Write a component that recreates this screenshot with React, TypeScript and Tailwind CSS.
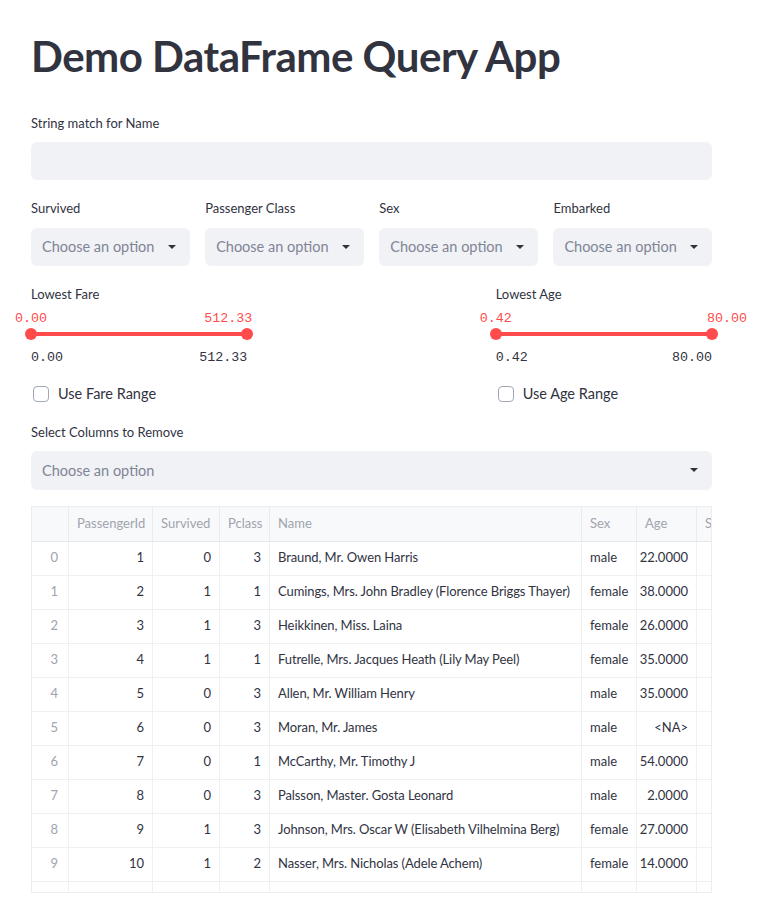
import React from "react";

const rows: [number, number, number, string, string, string][] = [
  [1, 0, 3, "Braund, Mr. Owen Harris", "male", "22.0000"],
  [2, 1, 1, "Cumings, Mrs. John Bradley (Florence Briggs Thayer)", "female", "38.0000"],
  [3, 1, 3, "Heikkinen, Miss. Laina", "female", "26.0000"],
  [4, 1, 1, "Futrelle, Mrs. Jacques Heath (Lily May Peel)", "female", "35.0000"],
  [5, 0, 3, "Allen, Mr. William Henry", "male", "35.0000"],
  [6, 0, 3, "Moran, Mr. James", "male", "<NA>"],
  [7, 0, 1, "McCarthy, Mr. Timothy J", "male", "54.0000"],
  [8, 0, 3, "Palsson, Master. Gosta Leonard", "male", "2.0000"],
  [9, 1, 3, "Johnson, Mrs. Oscar W (Elisabeth Vilhelmina Berg)", "female", "27.0000"],
  [10, 1, 2, "Nasser, Mrs. Nicholas (Adele Achem)", "female", "14.0000"],
  [11, 1, 3, "Sandstrom, Miss. Marguerite Rut", "female", "4.0000"],
];

function Caret() {
  return (
    <svg width="10" height="6" viewBox="0 0 10 6" className="shrink-0">
      <path d="M1 1h8L5 5z" fill="#31333f" />
    </svg>
  );
}

function Label({ children }: { children: React.ReactNode }) {
  return <div className="h-[21px] text-[13px] leading-[21px] text-[#31333f]">{children}</div>;
}

function Select({ label }: { label: string }) {
  return (
    <div className="flex flex-col">
      <Label>{label}</Label>
      <div className="mt-[8.5px] flex h-[38.4px] items-center justify-between rounded-[6px] bg-[#f0f2f6] pl-[11px] pr-[13px]">
        <span className="text-[14.5px] text-[#808495]">Choose an option</span>
        <Caret />
      </div>
    </div>
  );
}

function Slider({
  label,
  min,
  max,
  rightTop,
}: {
  label: string;
  min: string;
  max: string;
  rightTop: "end" | "start";
}) {
  return (
    <div className="flex flex-col">
      <Label>{label}</Label>
      <div className="relative mt-[5px] h-[28px]">
        <span className="absolute left-0 top-[1px] -translate-x-1/2 font-[family-name:'Liberation_Mono',monospace] text-[13.33px] leading-[16px] text-[#ff4b4b]">
          {min}
        </span>
        {rightTop === "end" ? (
          <span className="absolute right-[-5px] top-[1px] font-[family-name:'Liberation_Mono',monospace] text-[13.33px] leading-[16px] text-[#ff4b4b]">
            {max}
          </span>
        ) : (
          <span className="absolute left-[calc(100%-5px)] top-[1px] font-[family-name:'Liberation_Mono',monospace] text-[13.33px] leading-[16px] text-[#ff4b4b]">
            {max}
          </span>
        )}
        <div className="absolute bottom-[2px] left-0 right-0 h-[4px] rounded bg-[#ff4b4b]" />
        <div className="absolute bottom-[-2px] left-[-6px] h-[12px] w-[12px] rounded-full bg-[#ff4b4b]" />
        <div className="absolute bottom-[-2px] right-[-6px] h-[12px] w-[12px] rounded-full bg-[#ff4b4b]" />
      </div>
      <div className="mt-[12px] flex justify-between font-[family-name:'Liberation_Mono',monospace] text-[13.33px] leading-[16px] text-[#31333f]">
        <span>{min}</span>
        <span>{max}</span>
      </div>
    </div>
  );
}

function Checkbox({ label }: { label: string }) {
  return (
    <div className="flex h-[24px] items-center">
      <div className="ml-[2px] h-[16px] w-[16px] rounded-[4px] border border-[#a3a8b8] bg-white" />
      <span className="ml-[9px] text-[14.5px] text-[#31333f]">{label}</span>
    </div>
  );
}

const widths = ["w-[37px]", "w-[84px]", "w-[67px]", "w-[50px]", "w-[312px]", "w-[55px]", "w-[60px]"];

function Table() {
  const head = ["", "PassengerId", "Survived", "Pclass", "Name", "Sex", "Age"];
  return (
    <div className="mt-[16px] h-[387px] overflow-hidden border border-[#ebedf0] text-[13px]">
      <div className="flex h-[35px] border-b border-[#e6e8eb] bg-[#f8f9fb] text-[#a0a4ae]">
        {head.map((h, i) => (
          <div key={i} className={`${widths[i]} flex shrink-0 items-center border-r border-[#e9ebee] px-2`}>
            {h}
          </div>
        ))}
        <div className="flex min-w-0 flex-1 items-center overflow-hidden whitespace-nowrap pl-2">SibSp</div>
      </div>
      {rows.map((r, idx) => (
        <div key={idx} className="flex h-[34px] border-b border-[#eff0f2] text-[#31333f]">
          <div className={`${widths[0]} flex shrink-0 items-center justify-end border-r border-[#eff0f2] pr-[10px] text-[#a0a4ae]`}>
            {idx}
          </div>
          <div className={`${widths[1]} flex shrink-0 items-center justify-end border-r border-[#eff0f2] px-2`}>{r[0]}</div>
          <div className={`${widths[2]} flex shrink-0 items-center justify-end border-r border-[#eff0f2] px-2`}>{r[1]}</div>
          <div className={`${widths[3]} flex shrink-0 items-center justify-end border-r border-[#eff0f2] px-2`}>{r[2]}</div>
          <div className={`${widths[4]} flex shrink-0 items-center overflow-hidden whitespace-nowrap border-r border-[#eff0f2] px-2 tracking-[-0.1px]`}>{r[3]}</div>
          <div className={`${widths[5]} flex shrink-0 items-center border-r border-[#eff0f2] px-2`}>{r[4]}</div>
          <div className={`${widths[6]} flex shrink-0 items-center justify-end border-r border-[#eff0f2] px-2`}>{r[5]}</div>
          <div className="flex-1" />
        </div>
      ))}
    </div>
  );
}

export default function App() {
  return (
    <div className="min-h-screen bg-white font-[family-name:Lato,sans-serif] text-[#31333f]">
      <div className="ml-[31px] w-[681px] pt-[30px]">
        <h1 className="h-[83px] whitespace-nowrap text-[42px] font-bold leading-[52px] tracking-[-0.5px] text-[#31333f]">
          Demo DataFrame Query App
        </h1>

        <Label>String match for Name</Label>
        <div className="mt-[8px] h-[38.4px] rounded-[6px] bg-[#f0f2f6]" />

        <div className="mt-[18px] grid grid-cols-4 gap-[15.5px]">
          <Select label="Survived" />
          <Select label="Passenger Class" />
          <Select label="Sex" />
          <Select label="Embarked" />
        </div>

        <div className="mt-[18px] grid grid-cols-3 gap-[16px]">
          <div className="flex flex-col">
            <Slider label="Lowest Fare" min="0.00" max="512.33" rightTop="end" />
            <div className="mt-[16px]">
              <Checkbox label="Use Fare Range" />
            </div>
          </div>
          <div />
          <div className="flex flex-col">
            <Slider label="Lowest Age" min="0.42" max="80.00" rightTop="start" />
            <div className="mt-[16px]">
              <Checkbox label="Use Age Range" />
            </div>
          </div>
        </div>

        <div className="mt-[16px]">
          <Label>Select Columns to Remove</Label>
          <div className="mt-[8px] flex h-[38.4px] items-center justify-between rounded-[6px] bg-[#f0f2f6] pl-[11px] pr-[13px]">
            <span className="text-[14.5px] text-[#808495]">Choose an option</span>
            <Caret />
          </div>
        </div>

        <Table />
      </div>
    </div>
  );
}
